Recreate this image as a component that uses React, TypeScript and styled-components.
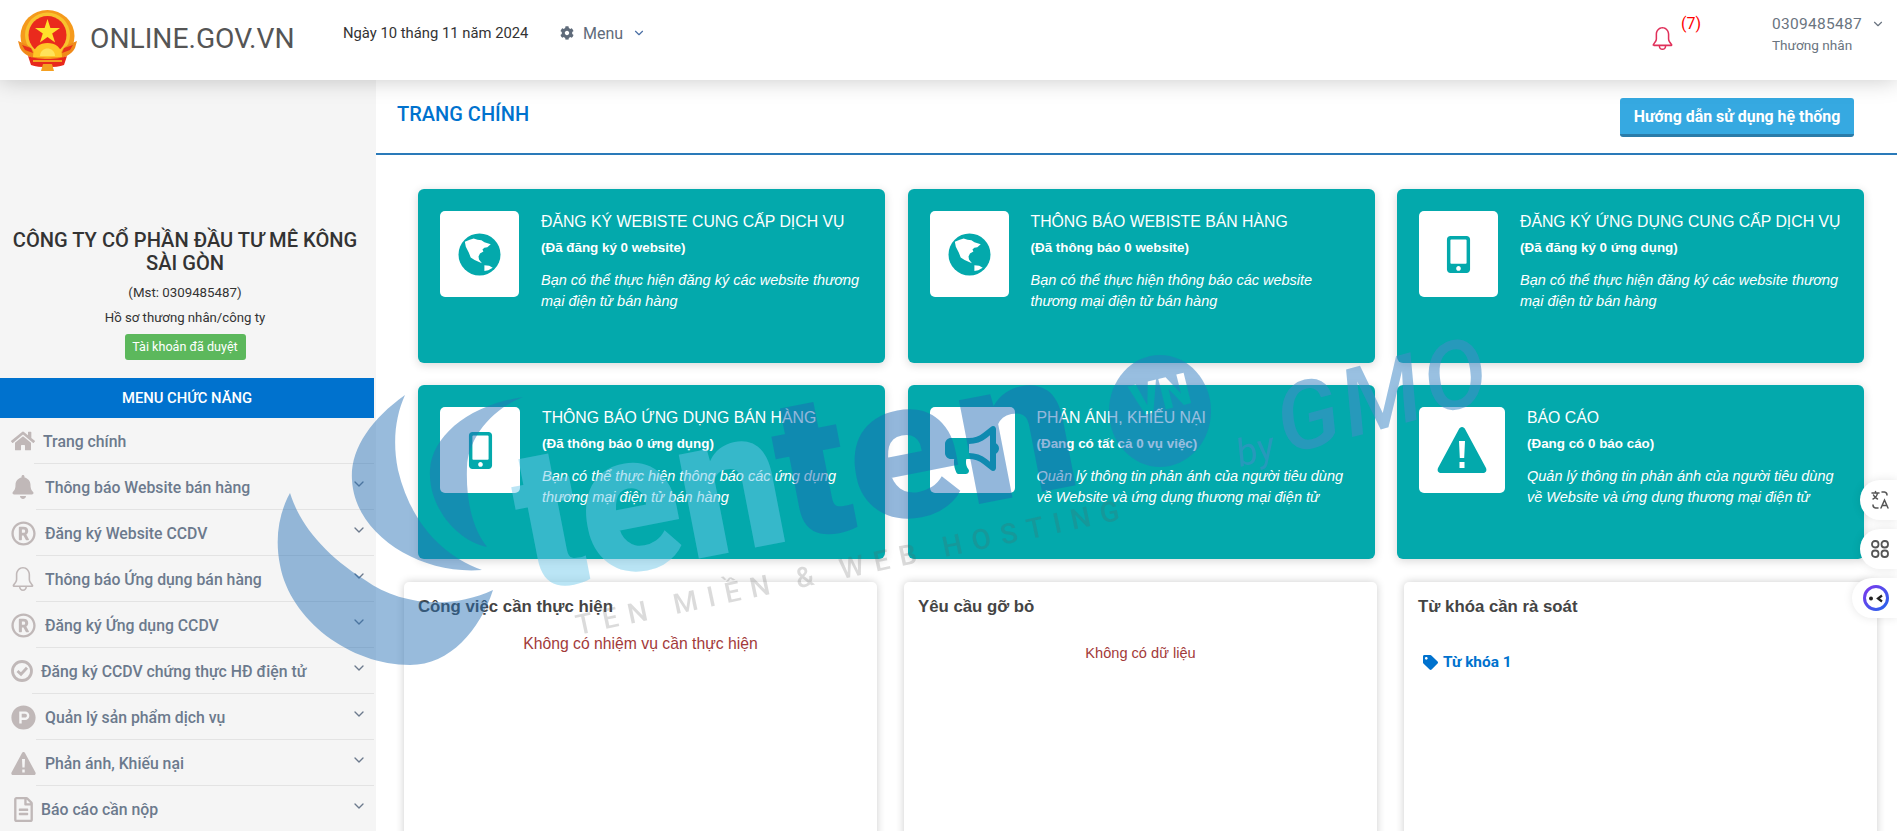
import React from "react";
import styled, { createGlobalStyle } from "styled-components";
import { FaCog, FaHome, FaBell, FaRegRegistered, FaProductHunt, FaRegFileAlt, FaMobileAlt, FaBullhorn, FaTag } from "react-icons/fa";
import { SlBell } from "react-icons/sl";
import { FiChevronDown } from "react-icons/fi";

const Global = createGlobalStyle`
  html, body { margin: 0; padding: 0; height: 831px; overflow: hidden; background: #fff; }
  * { box-sizing: border-box; }
`;

const Page = styled.div`
  position: relative;
  width: 1897px;
  height: 831px;
  overflow: hidden;
  display: flex;
  flex-direction: column;
  font-family: Roboto, "Liberation Sans", sans-serif;
`;
const Header = styled.header`
  position: relative;
  z-index: 2;
  flex: 0 0 80px;
  height: 80px;
  background: #fff;
  box-shadow: 0 0 22px rgba(0, 0, 0, 0.22);
  display: flex;
  align-items: center;
  padding-left: 18px;
`;
const Brand = styled.div`
  font-size: 28.2px;
  color: #555;
  margin: 0 0 3px 13px;
  width: 253px;
`;
const DateText = styled.div`
  font-size: 14.8px;
  color: #333;
  width: 217px;
  margin-bottom: 14px;
`;
const HeadMenu = styled.div`
  display: flex;
  align-items: center;
  color: #5f6b7a;
  font-size: 16px;
  margin-bottom: 14px;
  svg:first-child { font-size: 14px; margin-right: 9px; }
`;
const SmallChevron = styled(FiChevronDown)<{ $color?: string }>`
  font-size: 14px;
  margin-left: 9px;
  color: ${(p) => p.$color || "#4a6fa5"};
`;
const HeadRight = styled.div`
  margin-left: auto;
  display: flex;
  align-items: flex-start;
  height: 100%;
`;
const BellWrap = styled.div`
  display: flex;
  color: #e0305a;
  font-size: 23px;
  padding-top: 27px;
  width: 121px;
`;
const Count = styled.span`
  color: #f00;
  font-size: 16px;
  margin: -13px 0 0 7px;
  line-height: 20px;
`;
const User = styled.div`
  padding-top: 14px;
  width: 125px;
`;
const UserId = styled.div`
  font-size: 15.5px;
  color: #6a7480;
  line-height: 20px;
  letter-spacing: 0.3px;
  display: flex;
  align-items: center;
`;
const UserRole = styled.div`
  font-size: 13.6px;
  color: #6a7480;
  line-height: 20px;
  margin-top: 1px;
`;

const Body = styled.div`
  flex: 1;
  display: flex;
  min-height: 0;
`;
const Sidebar = styled.aside`
  flex: 0 0 376px;
  background: #f5f5f5;
  padding-top: 149px;
`;
const Company = styled.div`
  width: 370px;
  text-align: center;
  color: #333;
`;
const CompanyName = styled.div`
  font-size: 20.1px;
  font-weight: 500;
  line-height: 23px;
  margin-bottom: 8.5px;
  padding: 0 3px;
`;
const Mst = styled.div`
  font-size: 13.3px;
  line-height: 18px;
  margin-bottom: 7px;
`;
const Profile = styled.div`
  font-size: 13.2px;
  line-height: 18px;
  margin-bottom: 7.5px;
`;
const Badge = styled.span`
  display: inline-block;
  background: #5cb85c;
  color: #fff;
  font-size: 12.6px;
  line-height: 26px;
  height: 26px;
  width: 121px;
  border-radius: 3px;
`;
const MenuTitle = styled.div`
  width: 374px;
  height: 40px;
  margin-top: 18px;
  background: #0072ce;
  color: #fff;
  font-size: 14.8px;
  font-weight: 500;
  line-height: 40px;
  text-align: center;
`;
const Row = styled.div<{ $rule: number }>`
  height: 46px;
  width: 374px;
  display: flex;
  align-items: center;
  padding: 0 7px 0 11px;
  background: linear-gradient(#e3e3e3, #e3e3e3) no-repeat ${(p) => p.$rule}px 100% / calc(100% - ${(p) => p.$rule}px) 1px;
  color: #6c7a8d;
  font-size: 15.8px;
  font-weight: 500;
`;
const IconSlot = styled.span<{ $w: number; $size: number }>`
  flex: 0 0 ${(p) => p.$w}px;
  display: flex;
  align-items: center;
  color: #c0b8b8;
  font-size: ${(p) => p.$size}px;
`;
const RowChevron = styled(FiChevronDown)`
  margin-left: auto;
  margin-bottom: 7px;
  font-size: 16px;
  color: #6c7a8d;
`;

const Main = styled.main`
  flex: 1;
  min-width: 0;
  overflow: hidden;
`;
const PageHead = styled.div`
  height: 75px;
  border-bottom: 2px solid #2a7ab9;
  display: flex;
  align-items: center;
  justify-content: space-between;
  padding: 0 43px 0 21px;
`;
const PageTitle = styled.h1`
  margin: 0 0 6px;
  font-size: 20px;
  font-weight: 500;
  color: #0072ce;
`;
const GuideButton = styled.button`
  width: 234px;
  height: 39px;
  margin-top: 2px;
  border: 0;
  border-bottom: 3px solid #2a7ca9;
  border-radius: 3px;
  background: #36a9e1;
  color: #fff;
  font-family: Roboto, sans-serif;
  font-size: 15.9px;
  font-weight: 700;
`;
const CardGrid = styled.div`
  display: grid;
  grid-template-columns: repeat(3, 467px);
  grid-auto-rows: 174px;
  gap: 22px 22.5px;
  padding: 34px 0 0 42px;
  font-family: "Liberation Sans", Arial, sans-serif;
`;
const Card = styled.div`
  background: #03a9ac;
  border-radius: 6px;
  box-shadow: 0 2px 10px rgba(0, 0, 0, 0.16);
  color: #fff;
  display: flex;
  align-items: flex-start;
  gap: 22px;
  padding: 22px;
`;
const CardIcon = styled.div<{ $w: number }>`
  flex: 0 0 ${(p) => p.$w}px;
  height: 86px;
  border-radius: 5px;
  background: #fff;
  color: #03a9ac;
  display: flex;
  align-items: center;
  justify-content: center;
`;
const CardBody = styled.div`
  min-width: 0;
`;
const CardTitle = styled.div`
  font-size: 15.8px;
  line-height: 20px;
  margin-top: 1px;
  white-space: nowrap;
`;
const CardCount = styled.div`
  font-size: 13.4px;
  font-weight: 700;
  line-height: 16px;
  margin: 8px 0 14px;
`;
const CardText = styled.div`
  font-size: 14.5px;
  font-style: italic;
  line-height: 21px;
`;
const PanelRow = styled.div`
  display: grid;
  grid-template-columns: repeat(3, 473px);
  gap: 27px;
  padding: 23px 0 0 28px;
  font-family: "Liberation Sans", Arial, sans-serif;
`;
const Panel = styled.section`
  height: 300px;
  background: #fff;
  border-radius: 5px;
  box-shadow: 0 0 8px rgba(0, 0, 0, 0.2);
  padding: 16px 14px;
`;
const PanelTitle = styled.h3`
  margin: 0;
  font-size: 16.8px;
  font-weight: 700;
  line-height: 18px;
  color: #444;
`;
const EmptyText = styled.div<{ $top: number; $size: number }>`
  margin-top: ${(p) => p.$top}px;
  text-align: center;
  color: #a33a3a;
  font-size: ${(p) => p.$size}px;
  line-height: 18px;
`;
const KeywordLink = styled.div`
  margin-top: 37px;
  padding-left: 5px;
  display: flex;
  align-items: center;
  gap: 5px;
  color: #0072ce;
  font-family: Roboto, sans-serif;
  font-size: 15.4px;
  font-weight: 700;
  line-height: 18px;
  svg { font-size: 15px; }
`;

const Watermark = styled.svg`
  position: absolute;
  left: 0;
  top: 0;
  z-index: 3;
  pointer-events: none;
  filter: blur(0.7px);
`;
const FloatStack = styled.div`
  position: absolute;
  z-index: 4;
  right: 0;
  top: 480px;
  display: flex;
  flex-direction: column;
  align-items: flex-end;
  gap: 9px;
`;
const FloatButton = styled.div<{ $w: number }>`
  width: ${(p) => p.$w}px;
  height: 40px;
  border-radius: 20px 0 0 20px;
  background: #fff;
  box-shadow: 0 0 10px rgba(0, 0, 0, 0.1);
  display: flex;
  align-items: center;
  padding-left: 10px;
`;

type IconProps = { size?: number };

const WarnIcon = ({ size }: IconProps) => (
  <svg width={size || "1em"} height={size || "1em"} viewBox="0 0 50 50" fill="currentColor">
    <path
      fillRule="evenodd"
      d="M25 2 C26.500 2 27.500 3 28 4 L49 43 C50 45.500 49 48 46 48 H4 C1 48 0 45.500 1 43 L22 4 C22.500 3 23.500 2 25 2 Z M22 16 L22.800 33 H27.200 L28 16 Z M22.500 37 V43 H27.500 V37 Z"
    />
  </svg>
);

const CheckRing = ({ size }: IconProps) => (
  <svg width={size || "1em"} height={size || "1em"} viewBox="0 0 22 22" fill="none" stroke="currentColor" strokeWidth="2.800">
    <circle cx="11" cy="11" r="9.500" />
    <path d="M6.500 11 L10 14.300 L16 7.800" />
  </svg>
);

const GlobeIcon = ({ size }: IconProps) => (
  <svg width={size || "1em"} height={size || "1em"} viewBox="0 0 44 44" fill="currentColor">
    <circle cx="22" cy="22" r="21.500" />
    <path
      fill="#fff"
      d="M7 9 L12 7 L16 5.500 L20 7 L24 7.500 L27 9.500 L33.500 11.500 L30 14.500 L27 15 L25 17 L26 19 L22.500 21 L21 24 L21.500 27 L24.500 31 L21 29.500 L17 27.500 L13 25 L11 20 L8 14 Z M27 33 L32 33.500 L35.500 35.500 L31 38 L27 39 Z"
    />
  </svg>
);

const Emblem = () => (
  <svg width="59" height="61" viewBox="0 0 59 61">
    <ellipse cx="29.500" cy="26" rx="27" ry="26" fill="#f59a1c" />
    <circle cx="29.500" cy="25" r="22.500" fill="#f9c32e" />
    <circle cx="29.500" cy="25" r="19" fill="#ea2a1d" />
    <polygon points="29.5,9 32.4,18 42,18 34.2,23.5 37.1,32.5 29.5,27 21.9,32.5 24.8,23.5 17,18 26.6,18" fill="#ffe02a" />
    <path d="M0 31 C5 33 10 35 14 39 L20 50 C13 48 5 44 2 38 Z" fill="#f08a1a" />
    <path d="M59 31 C54 33 49 35 45 39 L39 50 C46 48 54 44 57 38 Z" fill="#f08a1a" />
    <path d="M4 35 L13 38 L15 43 L7 40 Z M55 35 L46 38 L44 43 L52 40 Z" fill="#e8321c" />
    <path d="M15 47 C15 37 22 33 29.500 33 C37 33 44 37 44 47 Z" fill="#ffc626" />
    <path d="M22 46 C22 41 26 38.500 29.500 38.500 C33 38.500 37 41 37 46 Z" fill="#ffe35a" />
    <path d="M10 46 C18 50 41 50 49 46 L46 55 C38 58 21 58 13 55 Z" fill="#e8281c" />
    <path d="M25 54 L34 54 L36 61 L23 61 Z M15 50 L44 50 L44 52 L15 52 Z" fill="#f4a021" />
  </svg>
);

const menu = [
  { label: "Trang chính", Icon: FaHome, size: 24, w: 32, rule: 34, chevron: false },
  { label: "Thông báo Website bán hàng", Icon: FaBell, size: 24, w: 34, rule: 36, chevron: true },
  { label: "Đăng ký Website CCDV", Icon: FaRegRegistered, size: 25, w: 34, rule: 36, chevron: true },
  { label: "Thông báo Ứng dụng bán hàng", Icon: SlBell, size: 24, w: 34, rule: 36, chevron: true },
  { label: "Đăng ký Ứng dụng CCDV", Icon: FaRegRegistered, size: 25, w: 34, rule: 36, chevron: true },
  { label: "Đăng ký CCDV chứng thực HĐ điện tử", Icon: CheckRing, size: 22, w: 30, rule: 32, chevron: true },
  { label: "Quản lý sản phẩm dịch vụ", Icon: FaProductHunt, size: 25, w: 34, rule: 36, chevron: true },
  { label: "Phản ánh, Khiếu nại", Icon: WarnIcon, size: 25, w: 34, rule: 36, chevron: true },
  { label: "Báo cáo cần nộp", Icon: FaRegFileAlt, size: 25, w: 30, rule: 36, chevron: true },
];

const cards = [
  { w: 79, Icon: GlobeIcon, size: 43, title: "ĐĂNG KÝ WEBISTE CUNG CẤP DỊCH VỤ", count: "(Đã đăng ký 0 website)", text: "Bạn có thể thực hiện đăng ký các website thương mại điện tử bán hàng" },
  { w: 79, Icon: GlobeIcon, size: 43, title: "THÔNG BÁO WEBISTE BÁN HÀNG", count: "(Đã thông báo 0 website)", text: "Bạn có thể thực hiện thông báo các website thương mại điện tử bán hàng" },
  { w: 79, Icon: FaMobileAlt, size: 37, title: "ĐĂNG KÝ ỨNG DỤNG CUNG CẤP DỊCH VỤ", count: "(Đã đăng ký 0 ứng dụng)", text: "Bạn có thể thực hiện đăng ký các website thương mại điện tử bán hàng" },
  { w: 80, Icon: FaMobileAlt, size: 37, title: "THÔNG BÁO ỨNG DỤNG BÁN HÀNG", count: "(Đã thông báo 0 ứng dụng)", text: "Bạn có thể thực hiện thông báo các ứng dụng thương mại điện tử bán hàng" },
  { w: 85, Icon: FaBullhorn, size: 54, title: "PHẢN ÁNH, KHIẾU NẠI", count: "(Đang có tất cả 0 vụ việc)", text: "Quản lý thông tin phản ánh của người tiêu dùng về Website và ứng dụng thương mại điện tử" },
  { w: 86, Icon: WarnIcon, size: 50, title: "BÁO CÁO", count: "(Đang có 0 báo cáo)", text: "Quản lý thông tin phản ánh của người tiêu dùng về Website và ứng dụng thương mại điện tử" },
];

export default function App() {
  return (
    <Page>
      <Global />
      <Header>
        <Emblem />
        <Brand>ONLINE.GOV.VN</Brand>
        <DateText>Ngày 10 tháng 11 năm 2024</DateText>
        <HeadMenu>
          <FaCog />
          Menu
          <SmallChevron />
        </HeadMenu>
        <HeadRight>
          <BellWrap>
            <SlBell />
            <Count>(7)</Count>
          </BellWrap>
          <User>
            <UserId>
              0309485487
              <SmallChevron $color="#6a7480" />
            </UserId>
            <UserRole>Thương nhân</UserRole>
          </User>
        </HeadRight>
      </Header>
      <Body>
        <Sidebar>
          <Company>
            <CompanyName>CÔNG TY CỔ PHẦN ĐẦU TƯ MÊ KÔNG SÀI GÒN</CompanyName>
            <Mst>(Mst: 0309485487)</Mst>
            <Profile>Hồ sơ thương nhân/công ty</Profile>
            <Badge>Tài khoản đã duyệt</Badge>
          </Company>
          <MenuTitle>MENU CHỨC NĂNG</MenuTitle>
          {menu.map((m) => (
            <Row key={m.label} $rule={m.rule}>
              <IconSlot $w={m.w} $size={m.size}>
                <m.Icon />
              </IconSlot>
              {m.label}
              {m.chevron && <RowChevron />}
            </Row>
          ))}
        </Sidebar>
        <Main>
          <PageHead>
            <PageTitle>TRANG CHÍNH</PageTitle>
            <GuideButton>Hướng dẫn sử dụng hệ thống</GuideButton>
          </PageHead>
          <CardGrid>
            {cards.map((c) => (
              <Card key={c.title}>
                <CardIcon $w={c.w}>
                  <c.Icon size={c.size} />
                </CardIcon>
                <CardBody>
                  <CardTitle>{c.title}</CardTitle>
                  <CardCount>{c.count}</CardCount>
                  <CardText>{c.text}</CardText>
                </CardBody>
              </Card>
            ))}
          </CardGrid>
          <PanelRow>
            <Panel>
              <PanelTitle>Công việc cần thực hiện</PanelTitle>
              <EmptyText $top={19} $size={15.75}>Không có nhiệm vụ cần thực hiện</EmptyText>
            </Panel>
            <Panel>
              <PanelTitle>Yêu cầu gỡ bỏ</PanelTitle>
              <EmptyText $top={28} $size={14.6}>Không có dữ liệu</EmptyText>
            </Panel>
            <Panel>
              <PanelTitle>Từ khóa cần rà soát</PanelTitle>
              <KeywordLink>
                <FaTag />
                Từ khóa 1
              </KeywordLink>
            </Panel>
          </PanelRow>
        </Main>
      </Body>

      <Watermark width="1897" height="831" viewBox="0 0 1897 831">
        <defs>
          <mask id="vn-cut">
            <rect x="1090" y="340" width="140" height="140" fill="#fff" />
            <text x="1162" y="410" transform="rotate(-14 1162 400)" textAnchor="middle" fontFamily="Roboto, sans-serif" fontWeight="900" fontSize="44" fill="#000">VN</text>
          </mask>
        </defs>
        <g fill="rgb(40,112,181)" fillOpacity="0.48">
          <path d="M405 395 C370 420 350 450 352 480 C355 535 420 575 482 570 C440 555 410 520 398 470 C392 440 396 415 405 395Z" />
          <path d="M523 397 C470 405 432 435 430 470 C428 505 455 540 487 547 C470 525 466 495 467 467 C468 440 490 410 523 397Z" />
          <path d="M290 493 C278 515 275 540 280 565 C290 620 350 665 410 665 C450 665 480 630 493 590 C450 610 400 605 365 580 C325 555 300 525 290 493Z" />
        </g>
        <g transform="rotate(-11 537 590)" fontFamily="Roboto, sans-serif" fontWeight="900" fontSize="200">
          <text x="530" y="590" fill="rgb(110,200,235)" fillOpacity="0.48" textLength="268" lengthAdjust="spacingAndGlyphs">ten</text>
          <text x="795" y="590" fill="rgb(30,105,180)" fillOpacity="0.48" textLength="300" lengthAdjust="spacingAndGlyphs">ten</text>
        </g>
        <ellipse cx="1160" cy="411" rx="51" ry="56" fill="rgb(40,120,190)" fillOpacity="0.48" mask="url(#vn-cut)" />
        <g transform="rotate(-15 1280 445)" fontFamily="Roboto, sans-serif" fill="rgb(70,140,200)" fillOpacity="0.55">
          <text x="1236" y="456" fontSize="38" fontStyle="italic">by</text>
          <text x="1283" y="456" fontSize="94" fontWeight="500" fontStyle="italic" letterSpacing="5">GMO</text>
        </g>
        <text transform="rotate(-12 578 635)" x="578" y="635" fontFamily="Roboto, sans-serif" fontWeight="500" fontSize="28" letterSpacing="10" fill="rgb(90,90,90)" fillOpacity="0.22">TÊN MIỀN &amp; WEB HOSTING</text>
      </Watermark>

      <FloatStack>
        <FloatButton $w={37}>
          <svg width="20" height="20" viewBox="0 0 20 20" fill="none" stroke="#555" strokeWidth="1.5" strokeLinecap="round">
            <path d="M2 3h7M5.500 1.500V3M3 9c2.500-1 4-3 4.500-6M3.500 5c.8 2 2.200 3.200 4 4M12 2h2.500A3 3 0 0 1 17 5M8 18H5.500A3 3 0 0 1 3 15M11 18l3.500-8 3.500 8M12.200 15.500h4.600" />
          </svg>
        </FloatButton>
        <FloatButton $w={37}>
          <svg width="20" height="20" viewBox="0 0 20 20" fill="none" stroke="#555" strokeWidth="1.8">
            <rect x="2" y="2" width="6.500" height="6.500" rx="3" />
            <rect x="11.500" y="2" width="6.500" height="6.500" rx="3" />
            <rect x="2" y="11.500" width="6.500" height="6.500" rx="3" />
            <rect x="11.500" y="11.500" width="6.500" height="6.500" rx="3" />
          </svg>
        </FloatButton>
        <FloatButton $w={45}>
          <svg width="28" height="28" viewBox="0 0 28 28">
            <defs>
              <linearGradient id="ring" x1="0" y1="0" x2="1" y2="1">
                <stop offset="0" stopColor="#7c3aed" />
                <stop offset="1" stopColor="#2563eb" />
              </linearGradient>
            </defs>
            <circle cx="14" cy="14" r="11.500" fill="#fff" stroke="url(#ring)" strokeWidth="3" />
            <circle cx="9" cy="14.500" r="2" fill="#222" />
            <path d="M20 11.500 L16 14.500 L20 17.500" fill="none" stroke="#222" strokeWidth="2.200" />
          </svg>
        </FloatButton>
      </FloatStack>
    </Page>
  );
}
